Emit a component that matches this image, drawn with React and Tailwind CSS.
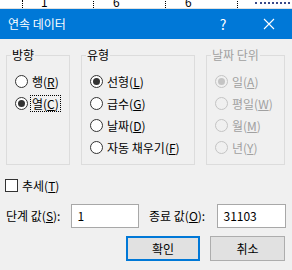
import React from "react";

const F = { fontFamily: '"Noto Sans CJK KR", "Noto Sans", sans-serif' };

function Acc({ k }) {
  return (
    <span>
      (<span className="underline underline-offset-[1px]">{k}</span>)
    </span>
  );
}

function Radio({ label, k, checked, disabled, focus }) {
  return (
    <div className="h-[22px] flex items-center gap-[2px]">
      <span
        className={
          "w-[13px] h-[13px] shrink-0 rounded-full border flex items-center justify-center " +
          (disabled ? "border-[#c4c4c4] bg-[#f0f0f0]" : "border-[#333333] bg-white")
        }
      >
        {checked && (
          <span
            className={
              "w-[7px] h-[7px] rounded-full " + (disabled ? "bg-[#c4c4c4]" : "bg-[#333333]")
            }
          />
        )}
      </span>
      <span
        className={
          "px-[1px] border leading-[15px] whitespace-nowrap " +
          (focus ? "border-dotted border-black" : "border-transparent") +
          (disabled ? " text-[#a0a0a0]" : " text-black")
        }
      >
        {label}
        <Acc k={k} />
      </span>
    </div>
  );
}

function Group({ title, width, disabled, children }) {
  return (
    <fieldset
      className={"h-[118px] border border-[#dcdcdc] pl-[8px] pr-[4px] " + width}
    >
      <legend
        className={
          "ml-[-4px] px-[1px] leading-[16px] " + (disabled ? "text-[#a0a0a0]" : "text-black")
        }
      >
        {title}
      </legend>
      <div className="mt-[7px] flex flex-col">{children}</div>
    </fieldset>
  );
}

export default function App() {
  return (
    <div className="w-[292px] h-[270px] bg-[#f0f0f0] text-[12px] overflow-hidden" style={F}>
      {/* spreadsheet strip behind */}
      <div className="h-[9px] bg-white flex overflow-hidden border-b border-[#e0e0e0]">
        <div className="w-[23px] border-r border-dotted border-black" />
        <div className="w-[71px] border-r border-dotted border-black pl-[18px] leading-[12px] -mt-[4px]">
          1
        </div>
        <div className="w-[72px] border-r border-dotted border-black pl-[19px] leading-[12px] -mt-[4px]">
          6
        </div>
        <div className="w-[72px] border-r border-dotted border-black pl-[19px] leading-[12px] -mt-[4px]">
          6
        </div>
        <div className="flex-1 pl-[17px] pr-[2px] pt-[2px]">
          <div className="h-[2px] border-t-2 border-dotted border-[#3a4a8a]" />
        </div>
      </div>

      {/* title bar */}
      <div className="h-[30px] bg-[#0078d7] flex items-center text-white">
        <div className="pl-[8px] text-[12px]">연속 데이터</div>
        <div className="ml-auto flex h-full">
          <div className="w-[46px] h-full flex items-center justify-center text-[14px]">?</div>
          <div className="w-[46px] h-full flex items-center justify-center">
            <svg width="12" height="12" viewBox="0 0 12 12">
              <path d="M1 1 L11 11 M11 1 L1 11" stroke="white" strokeWidth="1.1" fill="none" />
            </svg>
          </div>
        </div>
      </div>

      {/* body */}
      <div className="px-[6px]">
        <div className="flex gap-[11px] mt-[8px]">
          <Group title="방향" width="w-[64px]">
            <Radio label="행" k="R" />
            <Radio label="열" k="C" checked focus />
          </Group>
          <Group title="유형" width="w-[114px]">
            <Radio label="선형" k="L" checked />
            <Radio label="급수" k="G" />
            <Radio label="날짜" k="D" />
            <Radio label="자동 채우기" k="F" />
          </Group>
          <Group title="날짜 단위" width="w-[79px]" disabled>
            <Radio label="일" k="A" checked disabled />
            <Radio label="평일" k="W" disabled />
            <Radio label="월" k="M" disabled />
            <Radio label="년" k="Y" disabled />
          </Group>
        </div>

        <div className="mt-[14px] -ml-[1px] h-[13px] flex items-center gap-[4px]">
          <span className="w-[13px] h-[13px] border border-[#333333] bg-white" />
          <span className="leading-[15px]">
            추세<Acc k="T" />
          </span>
        </div>

        <div className="mt-[12px] flex items-center h-[24px]">
          <span className="w-[66px] whitespace-nowrap">
            단계 값<Acc k="S" />:
          </span>
          <div className="w-[68px] h-[24px] border border-[#a8a8a8] bg-white pl-[5px] flex items-center">
            1
          </div>
          <span className="ml-[10px] w-[69px] whitespace-nowrap">
            종료 값<Acc k="O" />:
          </span>
          <div className="w-[69px] h-[24px] border border-[#a8a8a8] bg-white pl-[5px] flex items-center">
            31103
          </div>
        </div>

        <div className="mt-[8px] flex justify-end gap-[10px] pr-[1px]">
          <div className="w-[74px] h-[25px] border-2 border-[#0078d7] bg-[#e1e1e1] flex items-center justify-center">
            확인
          </div>
          <div className="w-[75px] h-[25px] border border-[#adadad] bg-[#e1e1e1] flex items-center justify-center">
            취소
          </div>
        </div>
      </div>
    </div>
  );
}
